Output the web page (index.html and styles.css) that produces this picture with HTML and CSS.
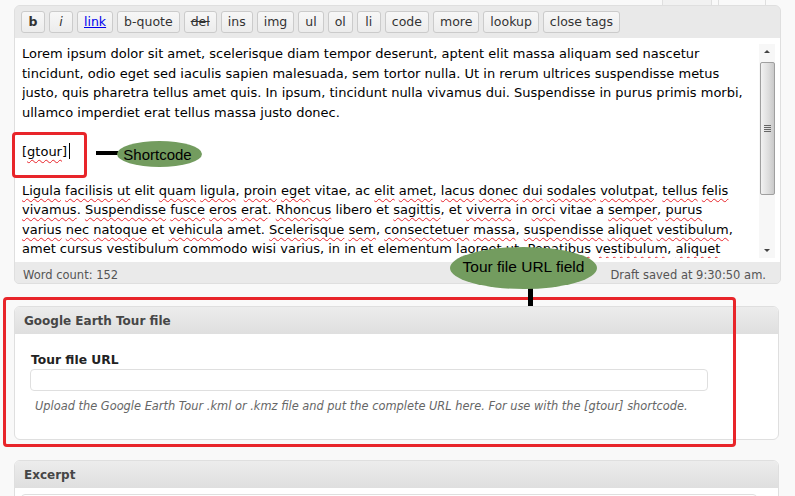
FILE: index.html
```html
<!DOCTYPE html>
<html>
<head>
<meta charset="utf-8">
<link rel="stylesheet" href="styles.css">
</head>
<body>
<div class="page">
  <div class="tabs">
    <span class="tab tab-visual"></span>
    <span class="tab tab-html"></span>
  </div>

  <div class="editor">
    <div class="toolbar">
      <button class="btn btn-b">b</button>
      <button class="btn btn-i">i</button>
      <button class="btn btn-link">link</button>
      <button class="btn">b-quote</button>
      <button class="btn btn-del">del</button>
      <button class="btn">ins</button>
      <button class="btn">img</button>
      <button class="btn">ul</button>
      <button class="btn">ol</button>
      <button class="btn">li</button>
      <button class="btn">code</button>
      <button class="btn">more</button>
      <button class="btn">lookup</button>
      <button class="btn">close tags</button>
    </div>
    <div class="content">
      <div class="text">
        <p>Lorem ipsum dolor sit amet, scelerisque diam tempor deserunt, aptent elit massa aliquam sed nascetur<br>tincidunt, odio eget sed iaculis sapien malesuada, sem tortor nulla. Ut in rerum ultrices suspendisse metus<br>justo, quis pharetra tellus amet quis. In ipsum, tincidunt nulla vivamus dui. Suspendisse in purus primis morbi,<br>ullamco imperdiet erat tellus massa justo donec.</p>
        <p>[<span class="sp">gtour</span>]<span class="caret"></span></p>
        <p><span class="sp">Ligula</span> <span class="sp">facilisis</span> <span class="sp">ut</span> elit <span class="sp">quam</span> <span class="sp">ligula</span>, <span class="sp">proin</span> <span class="sp">eget</span> vitae, ac <span class="sp">elit</span> <span class="sp">amet</span>, <span class="sp">lacus</span> <span class="sp">donec</span> <span class="sp">dui</span> <span class="sp">sodales</span> <span class="sp">volutpat</span>, <span class="sp">tellus</span> <span class="sp">felis</span><br><span class="sp">vivamus</span>. <span class="sp">Suspendisse</span> <span class="sp">fusce</span> <span class="sp">eros</span> <span class="sp">erat</span>. <span class="sp">Rhoncus</span> libero et <span class="sp">sagittis</span>, et <span class="sp">viverra</span> in <span class="sp">orci</span> vitae a <span class="sp">semper</span>, <span class="sp">purus</span><br><span class="sp">varius</span> <span class="sp">nec</span> <span class="sp">natoque</span> et <span class="sp">vehicula</span> amet. <span class="sp">Scelerisque</span> <span class="sp">sem</span>, <span class="sp">consectetuer</span> <span class="sp">massa</span>, <span class="sp">suspendisse</span> <span class="sp">aliquet</span> <span class="sp">vestibulum</span>,<br>amet cursus vestibulum commodo wisi varius, in in et elementum <span class="sp">laoreet</span> ut. <span class="sp">Penatibus</span> <span class="sp">vestibulum</span>, <span class="sp">aliquet</span></p>
      </div>
      <div class="scrollbar">
        <span class="arrow arrow-up"></span>
        <span class="thumb"><span class="grip"></span></span>
        <span class="track"></span>
        <span class="arrow arrow-down"></span>
      </div>
    </div>
    <div class="status">
      <span>Word count: 152</span>
      <span>Draft saved at 9:30:50 am.</span>
    </div>
  </div>

  <div class="postbox">
    <h3 class="postbox-title">Google Earth Tour file</h3>
    <div class="postbox-body">
      <label class="field-label">Tour file URL</label>
      <input class="field-input" type="text">
      <p class="field-help">Upload the Google Earth Tour .kml or .kmz file and put the complete URL here. For use with the [gtour] shortcode.</p>
    </div>
  </div>

  <div class="postbox excerpt">
    <h3 class="postbox-title">Excerpt</h3>
    <div class="excerpt-body">
      <div class="excerpt-area"></div>
    </div>
  </div>

  <div class="mark mark-code"></div>
  <div class="connector connector-h"></div>
  <div class="bubble bubble-short">Shortcode</div>

  <div class="mark mark-field"></div>
  <div class="connector connector-v"></div>
  <div class="bubble bubble-field">Tour file URL field</div>
</div>
</body>
</html>
```

FILE: styles.css
```css
* { box-sizing: border-box; }

html, body {
  margin: 0;
  padding: 0;
  background: #f9f9f9;
}

body {
  font-family: "DejaVu Sans", Verdana, sans-serif;
  color: #333;
  width: 795px;
  height: 496px;
  overflow: hidden;
}

.page {
  position: relative;
  width: 795px;
  height: 496px;
  overflow: hidden;
}

/* top tabs (bottoms visible) */
.tabs {
  display: flex;
  justify-content: flex-end;
  gap: 6px;
  height: 5px;
  padding-right: 29px;
}
.tab {
  display: block;
  height: 5px;
  border-left: 1px solid #dfdfdf;
  border-right: 1px solid #dfdfdf;
}
.tab-visual { width: 50px; background: #f1f1f1; }
.tab-html { width: 48px; background: #f9f9f9; }

/* editor */
.editor {
  margin: 0 14px;
  border: 1px solid #dfdfdf;
  border-radius: 6px 6px 5px 5px;
  background: #e9e9e9;
  overflow: hidden;
}

.toolbar {
  display: flex;
  gap: 4px;
  padding: 5px 6px 5px 6px;
  background: #e9e9e9;
}

.btn {
  height: 22px;
  min-width: 24px;
  padding: 0 6px;
  border: 1px solid #cbcbcb;
  border-radius: 3px;
  background: linear-gradient(#f7f7f7, #ececec);
  font-family: "DejaVu Sans", Verdana, sans-serif;
  font-size: 12.5px;
  color: #333;
  line-height: 20px;
  cursor: pointer;
}
.btn-b { font-weight: bold; }
.btn-i { font-style: italic; }
.btn-link { color: #0000ee; text-decoration: underline; }
.btn-del { text-decoration: line-through; }

.content {
  display: flex;
  height: 224px;
  background: #fff;
  padding: 6px 5px 4px 7px;
}

.text {
  flex: 1;
  overflow: hidden;
  font-size: 13px;
  line-height: 19.5px;
  color: #000;
  white-space: nowrap;
}
.text p {
  margin: 0 0 19.5px;
}
.text p:last-child { margin-bottom: 0; }

.sp {
  text-decoration: underline wavy #e8232a;
  text-decoration-thickness: 1px;
  text-underline-offset: 3px;
  text-decoration-skip-ink: none;
}

.caret {
  display: inline-block;
  width: 1px;
  height: 16px;
  margin-left: 2px;
  background: #000;
  vertical-align: -3px;
}

/* scrollbar */
.scrollbar {
  width: 16px;
  display: flex;
  flex-direction: column;
  align-items: center;
  background: #f7f7f7;
}
.arrow {
  display: block;
  width: 16px;
  height: 16px;
  position: relative;
}
.arrow::after {
  content: "";
  position: absolute;
  left: 5px;
  width: 0;
  height: 0;
  border-left: 3px solid transparent;
  border-right: 3px solid transparent;
}
.arrow-up::after { top: 6px; border-bottom: 3px solid #444; }
.arrow-down::after { top: 7px; border-top: 3px solid #444; }

.thumb {
  display: flex;
  align-items: center;
  justify-content: center;
  width: 15px;
  height: 133px;
  margin-top: 2px;
  border: 1px solid #9f9f9f;
  border-radius: 2px;
  background: linear-gradient(90deg, #f2f2f2, #dcdcdc 60%, #c9c9c9);
}
.grip {
  display: block;
  width: 7px;
  height: 7px;
  background: repeating-linear-gradient(#666 0 1px, transparent 1px 2px);
}
.track { flex: 1; }

/* status bar */
.status {
  display: flex;
  justify-content: space-between;
  height: 21px;
  padding: 4px 14px 0 8px;
  background: #eaeaea;
  font-size: 11.5px;
  color: #555;
  line-height: 18px;
}

/* postboxes */
.postbox {
  margin: 22px 16px 0 14px;
  border: 1px solid #dfdfdf;
  border-radius: 6px;
  background: #fff;
  overflow: hidden;
}
.postbox-title {
  margin: 0;
  height: 27px;
  padding: 0 9px;
  background: linear-gradient(#ececec, #dfdfdf);
  border-bottom: 1px solid #dfdfdf;
  font-size: 12px;
  font-weight: bold;
  color: #464646;
  line-height: 28px;
}
.postbox-body {
  display: flex;
  flex-direction: column;
  align-items: flex-start;
  height: 105px;
  padding: 17px 70px 0 15px;
}
.field-label {
  font-size: 12.3px;
  font-weight: bold;
  color: #222;
  line-height: 18px;
  padding-left: 1px;
}
.field-input {
  width: 678px;
  height: 22px;
  margin: 0;
  border: 1px solid #dfdfdf;
  border-radius: 4px;
  background: #fff;
}
.field-help {
  margin: 7px 0 0;
  padding-left: 5px;
  font-size: 11.4px;
  font-style: italic;
  color: #666;
  line-height: 16px;
}

.excerpt { margin-top: 20px; }
.excerpt-body {
  padding: 6px 21px 0 6px;
  height: 40px;
}
.excerpt-area {
  height: 30px;
  border: 1px solid #dfdfdf;
  border-radius: 4px;
}

/* annotations */
.mark {
  position: absolute;
  border: 3px solid #e8252a;
  border-radius: 4px;
}
.mark-code { left: 12px; top: 132px; width: 75px; height: 46px; }
.mark-field { left: 3px; top: 297px; width: 733px; height: 150px; }

.connector {
  position: absolute;
  background: #000;
}
.connector-h { left: 96px; top: 151px; width: 23px; height: 4px; }
.connector-v { left: 528px; top: 283px; width: 5px; height: 23px; }

.bubble {
  position: absolute;
  display: flex;
  align-items: center;
  justify-content: center;
  border-radius: 50%;
  background: #739c5f;
  color: #000;
  font-family: "Liberation Sans", Arial, sans-serif;
}
.bubble-short {
  left: 117px; top: 141px; width: 85px; height: 26px;
  font-size: 15px;
  padding-right: 4px;
}
.bubble-field {
  left: 450px; top: 247px; width: 147px; height: 42px;
  font-size: 15.5px;
  padding-bottom: 2px;
}
```
